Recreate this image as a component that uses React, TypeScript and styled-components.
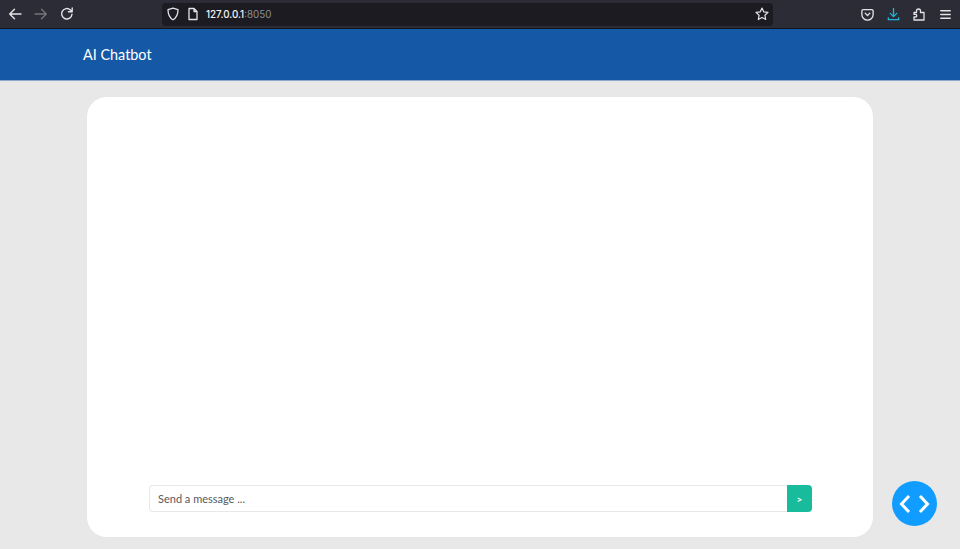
import React from 'react';
import styled, { createGlobalStyle } from 'styled-components';

const GlobalStyle = createGlobalStyle`
  html, body {
    margin: 0;
    padding: 0;
    height: 100%;
    overflow: hidden;
    background: #e8e8e8;
    font-family: Lato, "Liberation Sans", sans-serif;
  }
`;

const Page = styled.div`
  width: 960px;
  height: 549px;
  display: flex;
  flex-direction: column;
  position: relative;
  overflow: hidden;
`;

const BrowserBar = styled.div`
  height: 29px;
  flex: none;
  display: flex;
  align-items: center;
  box-sizing: border-box;
  background: #2b2c35;
  border-bottom: 1px solid #14151a;
`;

const NavButtons = styled.div`
  width: 162px;
  flex: none;
  display: flex;
  align-items: center;
  gap: 10px;
  padding-left: 7px;
  box-sizing: border-box;
`;

const IconSlot = styled.span<{ $color?: string }>`
  width: 16px;
  height: 16px;
  flex: none;
  display: flex;
  align-items: center;
  justify-content: center;
  color: ${props => props.$color || '#e4e4e8'};
`;

const UrlBar = styled.div`
  width: 611px;
  height: 23px;
  flex: none;
  display: flex;
  align-items: center;
  gap: 4px;
  padding: 0 3px;
  box-sizing: border-box;
  background: #1c1b22;
  border-radius: 4px;
`;

const UrlText = styled.span`
  flex: 1;
  margin-left: 1px;
  font-family: Inter, "Liberation Sans", sans-serif;
  font-size: 9.8px;
  font-weight: 500;
  color: #f4f4f6;
`;

const UrlPort = styled.span`
  color: #8e8e93;
  font-weight: 400;
`;

const Tools = styled.div`
  flex: 1;
  display: flex;
  align-items: center;
  justify-content: flex-end;
  gap: 10px;
  padding-right: 7px;
`;

const NavBar = styled.header`
  height: 52px;
  flex: none;
  display: flex;
  align-items: center;
  padding-left: 83px;
  background: #1558a6;
  border-bottom: 1px solid #8ea9cc;
  box-sizing: border-box;
`;

const Brand = styled.div`
  font-size: 14.4px;
  color: #ffffff;
`;

const Content = styled.main`
  flex: 1;
  display: flex;
  padding: 16px 0 12px 87px;
  box-sizing: border-box;
`;

const ChatCard = styled.section`
  width: 786px;
  display: flex;
  flex-direction: column;
  justify-content: flex-end;
  padding: 0 61px 25px 62px;
  box-sizing: border-box;
  background: #ffffff;
  border-radius: 20px;
`;

const MessageForm = styled.form`
  display: flex;
  height: 27px;
  margin: 0;
`;

const MessageInput = styled.input`
  flex: 1;
  min-width: 0;
  padding: 0 8px;
  box-sizing: border-box;
  font-family: Lato, "Liberation Sans", sans-serif;
  font-size: 11px;
  color: #495057;
  background: #ffffff;
  border: 1px solid #e6e8ea;
  border-right: none;
  border-radius: 4px 0 0 4px;
  outline: none;

  &::placeholder {
    color: #55595e;
    opacity: 1;
  }
`;

const SendButton = styled.button`
  width: 25px;
  padding: 0;
  font-family: Lato, "Liberation Sans", sans-serif;
  font-size: 10px;
  font-weight: 700;
  color: #ffffff;
  background: #18bc9c;
  border: none;
  border-radius: 0 4px 4px 0;
`;

const CodeButton = styled.button`
  position: absolute;
  left: 892px;
  top: 481px;
  width: 45px;
  height: 45px;
  padding: 0;
  display: flex;
  align-items: center;
  justify-content: center;
  background: #119dff;
  border: none;
  border-radius: 50%;
`;

const Icon: React.FC<{ children: React.ReactNode; width?: number; size?: number }> = ({ children, width = 1.4, size = 16 }) => (
  <svg width={size} height={size} viewBox="0 0 16 16" fill="none" stroke="currentColor" strokeWidth={width} strokeLinecap="round" strokeLinejoin="round">
    {children}
  </svg>
);

export default function App() {
  return (
    <Page>
      <GlobalStyle />
      <BrowserBar>
        <NavButtons>
          <IconSlot>
            <Icon><path d="M14 8H3M7.5 3.2 2.7 8l4.8 4.8" /></Icon>
          </IconSlot>
          <IconSlot $color="#74747a">
            <Icon><path d="M2 8h11M8.5 3.2 13.3 8l-4.800 4.800" /></Icon>
          </IconSlot>
          <IconSlot>
            <Icon><path d="M13 8.3A5.200 5.200 0 1 1 11.400 4L13 5.600M13.200 2v3.800H9.400" /></Icon>
          </IconSlot>
        </NavButtons>
        <UrlBar>
          <IconSlot>
            <Icon width={1.3}><path d="M8 2.200 13 3.600c0 5.200-1.600 8.400-5 10.200C4.600 12 3 8.800 3 3.600Z" /></Icon>
          </IconSlot>
          <IconSlot>
            <Icon width={1.3}><path d="M4 2.500h5l3 3v8H4ZM9 2.500v3h3" /></Icon>
          </IconSlot>
          <UrlText>127.0.0.1<UrlPort>:8050</UrlPort></UrlText>
          <IconSlot>
            <Icon width={1.2}><path d="m8 2 1.800 3.900 4.200.5-3.100 2.900.8 4.200L8 11.400 4.300 13.500l.8-4.200L2 6.400l4.200-.5Z" /></Icon>
          </IconSlot>
        </UrlBar>
        <Tools>
          <IconSlot>
            <Icon width={1.4} size={15}><path d="M3.500 2.800h9A1.500 1.500 0 0 1 14 4.300V8A6 6 0 0 1 2 8V4.300a1.500 1.500 0 0 1 1.500-1.500ZM5.500 6.500 8 9l2.500-2.500" /></Icon>
          </IconSlot>
          <IconSlot $color="#1fb6d8">
            <Icon size={15}><path d="M8 1.500v8.500M4.500 6.800 8 10.300l3.500-3.500M2.500 11.500v2h11v-2" /></Icon>
          </IconSlot>
          <IconSlot>
            <Icon width={1.3}><path d="M3 6.500h2.500V5a2 2 0 0 1 4 0v1.500H13v7.500H3v-3h1.500a1.300 1.300 0 0 0 0-2.600H3Z" /></Icon>
          </IconSlot>
          <IconSlot>
            <Icon width={1.6} size={15}><path d="M3 4h10M3 8h10M3 12h10" /></Icon>
          </IconSlot>
        </Tools>
      </BrowserBar>
      <NavBar>
        <Brand>AI Chatbot</Brand>
      </NavBar>
      <Content>
        <ChatCard>
          <MessageForm>
            <MessageInput placeholder="Send a message ..." />
            <SendButton type="button">&gt;</SendButton>
          </MessageForm>
        </ChatCard>
      </Content>
      <CodeButton type="button" aria-label="Toggle debug tools">
        <svg width="31" height="20" viewBox="0 0 31 20" fill="none" stroke="#ffffff" strokeWidth="3" strokeLinecap="square">
          <path d="M9 3 2.500 10 9 17M22 3l6.500 7L22 17" />
        </svg>
      </CodeButton>
    </Page>
  );
}
